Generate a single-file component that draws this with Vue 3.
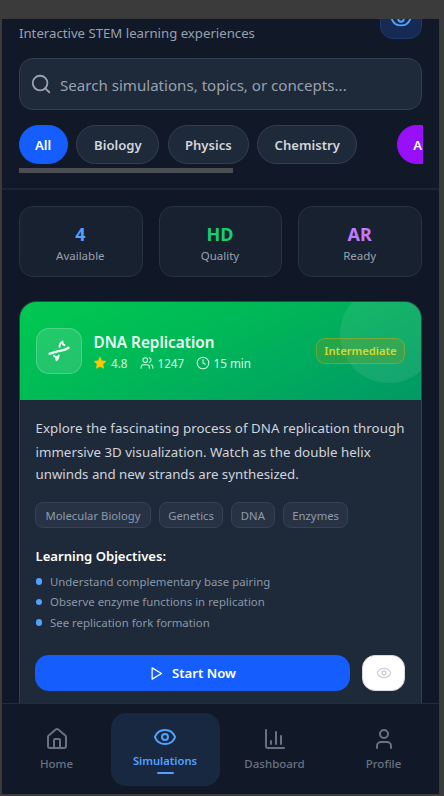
<script setup>
const filters = [
  { label: 'All', kind: 'active', width: 49 },
  { label: 'Biology', kind: '', width: 83 },
  { label: 'Physics', kind: '', width: 81 },
  { label: 'Chemistry', kind: '', width: 100 },
  { label: 'AR Ready', kind: 'ar', width: 94 },
]
const stats = [
  { value: '4', label: 'Available', tone: 'blue' },
  { value: 'HD', label: 'Quality', tone: 'green' },
  { value: 'AR', label: 'Ready', tone: 'purple' },
]
const tags = [
  { label: 'Molecular Biology', width: 116 },
  { label: 'Genetics', width: 63.5 },
  { label: 'DNA', width: 43.5 },
  { label: 'Enzymes', width: 65.5 },
]
const objectives = [
  { text: 'Understand complementary base pairing', cls: 'o1' },
  { text: 'Observe enzyme functions in replication', cls: 'o2' },
  { text: 'See replication fork formation', cls: 'o3' },
]
</script>

<template>
  <div class="stage">
    <div class="phone">
      <main class="content">
        <header class="header">
          <div class="intro">
            <p class="subtitle">Interactive STEM learning experiences</p>
            <button class="view-btn">
              <svg class="i22" viewBox="0 0 24 24"><path d="M2.06 12.35a1 1 0 0 1 0-.7 10.75 10.75 0 0 1 19.88 0 1 1 0 0 1 0 .7 10.75 10.75 0 0 1-19.88 0" /><circle cx="12" cy="12" r="3" /></svg>
            </button>
          </div>
          <div class="search">
            <svg class="i22" viewBox="0 0 24 24"><circle cx="11" cy="11" r="8" /><path d="m21 21-4.3-4.3" /></svg>
            <span class="placeholder">Search simulations, topics, or concepts...</span>
          </div>
          <div class="filters">
            <button v-for="f in filters" :key="f.label" class="chip" :class="f.kind" :style="{ width: f.width + 'px' }">{{ f.label }}</button>
          </div>
          <div class="track"><div class="thumb"></div></div>
        </header>

        <section class="stats">
          <div v-for="s in stats" :key="s.value" class="stat">
            <strong :class="s.tone">{{ s.value }}</strong>
            <span>{{ s.label }}</span>
          </div>
        </section>

        <article class="card">
          <div class="hero">
            <div class="orb"></div>
            <div class="glyph">
              <svg viewBox="0 0 24 24"><path class="strand" d="M2.500 14.700c2.200-.2 4.500-1.500 8-2.300 4-.9 7.500-1 11-3.600" /><path d="M12.500 7.800c.2-2.600 1.200-4.500 3-5.300l.2 2.300 1.800 1.400M11.700 16.400c-.1 2-1 3.700-2.200 4.800l-.5-2.700-2-1.700M9 18.500l2.400-1.300" /></svg>
            </div>
            <div class="heading">
              <h2>DNA Replication</h2>
              <div class="meta">
                <span class="m1"><svg class="star" viewBox="0 0 24 24"><path d="m12 1.800 3.100 6.400 7 1-5.100 4.900 1.200 7-6.200-3.300-6.200 3.300 1.200-7-5.100-4.900 7-1z" /></svg>4.8</span>
                <span class="m2"><svg viewBox="0 0 24 24"><path d="M16 21v-2a4 4 0 0 0-4-4H6a4 4 0 0 0-4 4v2M22 21v-2a4 4 0 0 0-3-3.870M16 3.130a4 4 0 0 1 0 7.750" /><circle cx="9" cy="7" r="4" /></svg>1247</span>
                <span><svg viewBox="0 0 24 24"><circle cx="12" cy="12" r="10" /><path d="M12 6v6l4 2" /></svg>15 min</span>
              </div>
            </div>
            <span class="badge">Intermediate</span>
          </div>
          <div class="body">
            <p class="desc"><span class="d1">Explore the fascinating process of DNA replication through</span><span class="d2">immersive 3D visualization. Watch as the double helix</span><span class="d3">unwinds and new strands are synthesized.</span></p>
            <div class="tags">
              <span v-for="t in tags" :key="t.label" :style="{ width: t.width + 'px' }">{{ t.label }}</span>
            </div>
            <h3>Learning Objectives:</h3>
            <ul>
              <li v-for="o in objectives" :key="o.cls"><i></i><span :class="o.cls">{{ o.text }}</span></li>
            </ul>
            <div class="actions">
              <button class="start">
                <svg viewBox="0 0 24 24"><path d="M5 3v18l15-9z" /></svg>
                <span>Start Now</span>
              </button>
              <button class="preview">
                <svg viewBox="0 0 24 24"><path d="M2.060 12.350a1 1 0 0 1 0-.7 10.750 10.750 0 0 1 19.880 0 1 1 0 0 1 0 .7 10.750 10.750 0 0 1-19.880 0" /><circle cx="12" cy="12" r="3" /></svg>
              </button>
            </div>
          </div>
        </article>
      </main>

      <nav class="nav">
        <a class="item">
          <svg viewBox="0 0 24 24"><path d="M15 21v-8a1 1 0 0 0-1-1h-4a1 1 0 0 0-1 1v8" /><path d="M3 10a2 2 0 0 1 .7-1.530l7-6a2 2 0 0 1 2.600 0l7 6A2 2 0 0 1 21 10v9a2 2 0 0 1-2 2H5a2 2 0 0 1-2-2z" /></svg>
          <span>Home</span>
        </a>
        <a class="item current">
          <svg viewBox="0 0 24 24"><path d="M2.060 12.350a1 1 0 0 1 0-.7 10.750 10.750 0 0 1 19.880 0 1 1 0 0 1 0 .7 10.750 10.750 0 0 1-19.880 0" /><circle cx="12" cy="12" r="3" /></svg>
          <span>Simulations</span>
          <b></b>
        </a>
        <a class="item">
          <svg viewBox="0 0 24 24"><path d="M3 3v16a2 2 0 0 0 2 2h16M18 17V9M13 17V5M8 17v-3" /></svg>
          <span>Dashboard</span>
        </a>
        <a class="item">
          <svg viewBox="0 0 24 24"><path d="M19 21v-2a4 4 0 0 0-4-4H9a4 4 0 0 0-4 4v2" /><circle cx="12" cy="7" r="4" /></svg>
          <span>Profile</span>
        </a>
      </nav>
    </div>
  </div>
</template>

<style>
body { margin: 0; background: #3b3b3b; }
</style>

<style scoped>
.stage { box-sizing: border-box; height: 796px; padding: 19px 5.5px 2px 2px; background: #3b3b3b; overflow: hidden; font-family: "Noto Sans", "Open Sans", sans-serif; }
.stage *, .stage *::before { box-sizing: border-box; }
.phone { height: 775px; display: flex; flex-direction: column; background: #101726; overflow: hidden; }
.content { flex: 1; min-height: 0; overflow: hidden; }
svg { fill: none; stroke: currentColor; stroke-width: 2; stroke-linecap: round; stroke-linejoin: round; flex: none; display: block; }
button { font-family: inherit; border: 0; padding: 0; display: flex; align-items: center; justify-content: center; flex: none; }
p, h2, h3, ul { margin: 0; padding: 0; }
span, h2, h3, strong { white-space: nowrap; }

.header { height: 193px; margin-top: -22px; padding: 0 16.500px 0 17px; background: #111827; border-bottom: 2px solid #1b2434; }
.intro { height: 42px; display: flex; justify-content: space-between; align-items: flex-end; }
.subtitle { font-size: 13.200px; line-height: 18px; color: #99a1af; margin-bottom: -3px; }
.view-btn { width: 42px; height: 42px; border-radius: 13px; background: #172a53; border: 1px solid #1d3a70; color: #51a2ff; }
.view-btn svg { margin-top: 2px; }
.i22 { width: 22px; height: 22px; }
.search { height: 52px; margin-top: 19px; padding-left: 10px; display: flex; align-items: center; gap: 8px; border: 1px solid #344052; border-radius: 14px; background: #1e2939; color: #99a1af; font-size: 15.100px; }
.placeholder { padding-top: 2px; }
.filters { height: 39px; margin: 15px -.5px 0 0; display: flex; gap: 8.400px; overflow: hidden; }
.chip { height: 39px; border-radius: 20px; background: #1e2939; border: 1px solid #344052; color: #d1d5dc; font-size: 13.100px; font-weight: 600; white-space: nowrap; }
.chip.active { background: #155dfc; border-color: #155dfc; color: #fff; padding-right: 1px; }
.chip.ar { margin-left: 31.500px; padding-right: 2px; background: #9810fa; border-color: #9810fa; color: #fff; }
.track { height: 5px; margin-top: 4px; }
.thumb { width: 214px; height: 5px; background: #4c4e55; }

.stats { display: grid; grid-template-columns: repeat(3, 1fr); gap: 16px; padding: 16px 16.5px 0 17px; }
.stat { height: 71px; display: flex; flex-direction: column; align-items: center; padding: 15px 1px 0 0; border: 1px solid #263342; border-radius: 14px; background: #18212f; }
.stat strong { font-size: 18px; line-height: 24px; font-weight: 700; }
.stat span { font-size: 11.500px; line-height: 18px; margin-top: 1px; color: #99a1af; }
.blue { color: #51a2ff; }
.green { color: #18ce75; }
.purple { color: #c27aff; }

.card { margin: 24px 16.500px 0 17px; height: 440px; border: 1px solid #344052; border-radius: 17px; background: #1e2939; overflow: hidden; }
.hero { position: relative; height: 99px; margin: -1px -1px 0; display: flex; align-items: center; padding: 0 17px 0 16.500px; background: linear-gradient(155deg, #00c951 0%, #00b957 40%, #009966 100%); overflow: hidden; border-radius: 16px 16px 0 0; }
.orb { position: absolute; right: -16px; top: -16px; width: 98px; height: 98px; border-radius: 50%; background: rgba(255, 255, 255, .08); }
.glyph { width: 46px; height: 46px; flex: none; display: flex; align-items: center; justify-content: center; border-radius: 13px; background: rgba(255, 255, 255, .13); border: 1px solid rgba(255, 255, 255, .2); color: #effff5; }
.glyph svg { width: 24px; height: 24px; stroke-width: 1.900; }
.glyph .strand { stroke-width: 2.400; }
.heading { flex: 1; padding: 2px 0 0 12px; }
h2 { font-size: 15.300px; line-height: 22px; font-weight: 600; color: #e9fff0; }
.meta { display: flex; color: #d7f7e3; }
.meta span { display: flex; align-items: center; gap: 4px; font-size: 11.700px; line-height: 20px; }
.meta .m1 { width: 46px; }
.meta .m2 { width: 56px; }
.meta svg { width: 14px; height: 14px; stroke-width: 1.800; }
.meta .star { fill: #fdc700; stroke: #fdc700; stroke-width: 1; margin-left: -.5px; }
.badge { width: 89px; height: 26px; position: relative; flex: none; display: flex; align-items: center; justify-content: center; border: 1px solid rgba(240, 177, 0, .35); border-radius: 9px; background: rgba(180, 150, 0, .2); color: #dcd82b; font-size: 11.200px; font-weight: 600; }

.body { padding: 17px 16px 0 15.500px; }
.desc { display: flex; flex-direction: column; align-items: flex-start; font-size: 13.300px; line-height: 23px; color: #d1d5dc; }
.d1 { letter-spacing: .05px; }
.d2 { line-height: 24px; letter-spacing: .02px; }
.d3 { line-height: 22px; letter-spacing: -.02px; margin-top: -1px; }
.tags { display: flex; gap: 8.300px; margin: 17px 0 0 -.5px; }
.tags span { height: 26px; display: flex; align-items: center; justify-content: center; border: 1px solid #364354; border-radius: 8px; background: #273344; color: #8e9bac; font-size: 11.300px; }
h3 { margin-top: 18px; font-size: 13.100px; line-height: 20px; font-weight: 600; color: #fff; }
ul { list-style: none; margin-top: 5px; }
li { display: flex; align-items: center; gap: 8px; height: 20.500px; font-size: 11.400px; color: #8b98a8; }
li i { width: 6.500px; height: 6.500px; border-radius: 50%; background: #51a2ff; }
.actions { display: flex; gap: 12px; margin: 22.500px 0 0 -.5px; }
.start { width: 315px; height: 36px; gap: 8px; border-radius: 14px; background: #155dfc; color: #fff; font-size: 13.200px; font-weight: 600; }
.start svg { width: 15px; height: 15px; }
.preview { width: 43px; height: 36px; border-radius: 13px; background: #fff; color: #cdd0d6; border: 1px solid #d7dade; }
.preview svg { width: 16px; height: 16px; }

.nav { flex: none; height: 91px; padding: 9px 0 8px; display: grid; grid-template-columns: repeat(4, 109px); border-top: 1px solid #202d3d; background: #111827; }
.item { height: 73px; display: flex; flex-direction: column; align-items: center; padding-top: 14px; border-radius: 15px; color: #6a7282; }
.item svg { width: 24px; height: 24px; }
.item span { font-size: 11.500px; line-height: 18px; margin-top: 3.500px; font-weight: 500; }
.current { background: #182840; color: #51a2ff; padding: 12px 1px 0 0; }
.current span { font-weight: 600; font-size: 11.200px; margin-top: 3px; }
.current b { width: 17px; height: 2px; margin-top: 2px; border-radius: 2px; background: #51a2ff; }
</style>
